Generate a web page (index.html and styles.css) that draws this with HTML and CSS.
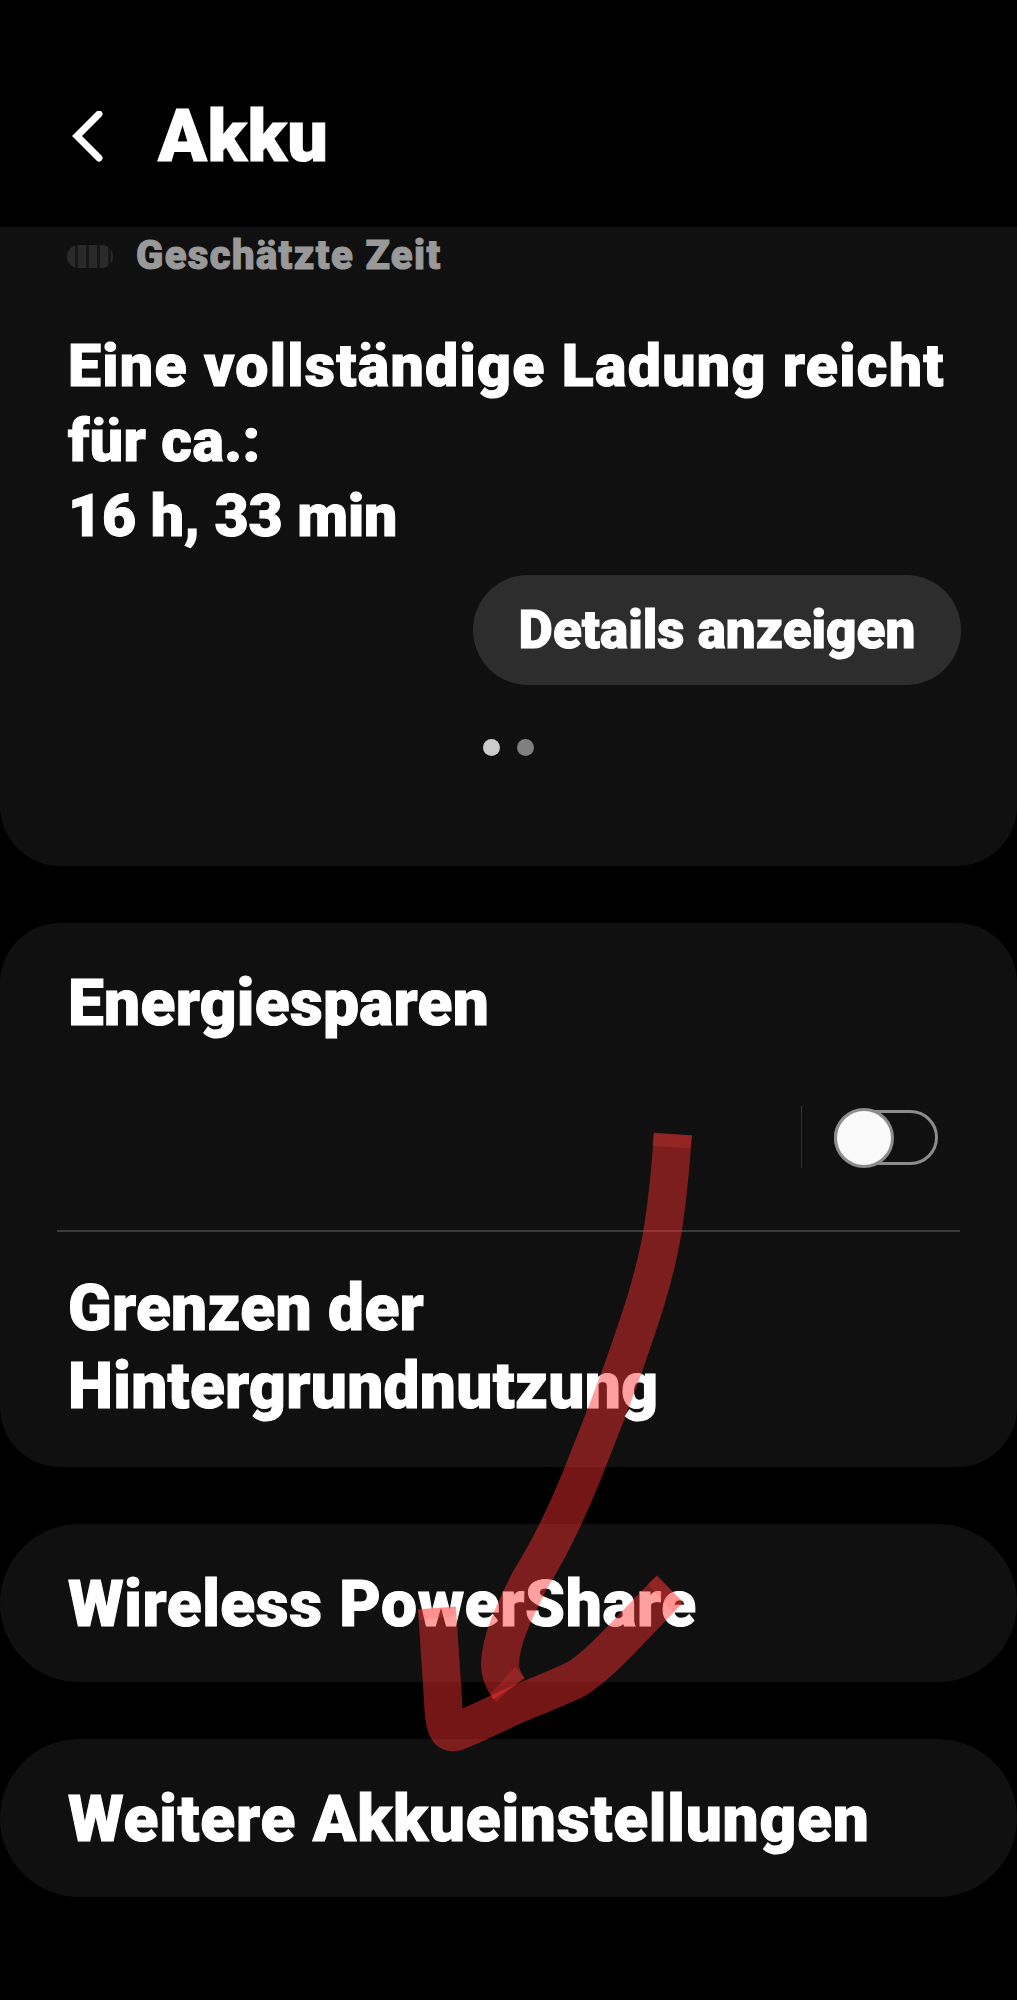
FILE: index.html
```html
<!DOCTYPE html>
<html lang="de">
<head>
<meta charset="utf-8">
<title>Akku</title>
<link rel="stylesheet" href="styles.css">
</head>
<body>
<div class="page">
  <header class="top">
    <svg class="back" width="32" height="52" viewBox="0 0 32 52"><path d="M27 3 L5 25 L27 47" fill="none" stroke="#fff" stroke-width="7" stroke-linecap="round" stroke-linejoin="miter"/></svg>
    <h1 class="title">Akku</h1>
  </header>
  <section class="card card-first">
    <div class="tag">
      <span class="pill"></span>
      <span class="tag-text">Geschätzte Zeit</span>
    </div>
    <p class="estimate"><span class="lead">Eine vollständige Ladung reicht</span><br>für ca.:<br><span class="time">16 h, 33 min</span></p>
    <div class="action"><span class="btn">Details anzeigen</span></div>
    <div class="dots"><span class="dot dot-on"></span><span class="dot"></span></div>
  </section>
  <section class="card card-group">
    <div class="row-save">
      <div class="label">Energiesparen</div>
      <div class="switch-line">
        <span class="vline"></span>
        <span class="switch"><span class="knob"></span></span>
      </div>
    </div>
    <div class="sep"></div>
    <div class="label label-two">Grenzen der<br>Hintergrundnutzung</div>
  </section>
  <section class="card card-pill"><div class="label">Wireless PowerShare</div></section>
  <section class="card card-pill"><div class="label label-wide">Weitere Akkueinstellungen</div></section>
  <svg class="scribble" width="1017" height="2000" viewBox="0 0 1017 2000">
    <path class="ink" d="M673 1134 C670 1170 668 1205 660 1245 C652 1285 640 1320 626 1360 C612 1400 598 1435 582 1475 C570 1505 555 1540 530 1580 C515 1610 500 1640 500 1665 C500 1675 505 1683 509 1689"/>
    <path class="ink" d="M437 1608 C439 1640 441 1670 443 1700 C444 1730 448 1733 456 1732 C480 1722 500 1712 520 1703 C545 1693 565 1685 578 1678 C600 1664 625 1635 670 1589"/>
    <path class="ink-tip" d="M653 1134 L692 1135 L690 1148 L652 1146 Z"/>
    <path class="ink-tip" d="M490 1694 L515 1667 L524 1677 L496 1702 Z"/>
    <path class="ink-tip" d="M418 1610 L455 1606 L456 1616 L419 1620 Z"/>
    <path class="ink-tip" d="M658 1575 L682 1603 L672 1612 L648 1584 Z"/>
  </svg>
</div>
</body>
</html>
```

FILE: styles.css
```css
* { box-sizing: border-box; }
html, body { margin: 0; padding: 0; background: #000; }
body { font-family: Roboto, Inter, sans-serif; font-weight: 900; color: #fff; -webkit-text-stroke: 1px currentColor; }
.page { position: relative; width: 1017px; height: 2000px; overflow: hidden; background: #000; }

.top { height: 227px; display: flex; align-items: center; padding: 46px 0 0 72px; }
.back { margin-right: 54px; }
.title { margin: 0; font-size: 72px; line-height: 1; font-weight: 900; letter-spacing: 0.5px; }

.card { background: #101010; }
.card-first { height: 639px; border-radius: 0 0 60px 60px; padding: 14px 56px 0 69px; }
.tag { display: flex; align-items: center; height: 30px; }
.pill { width: 46px; height: 23px; margin-left: -2px; border-radius: 12px; margin-right: 23px;
  background: repeating-linear-gradient(90deg, #2a2a2a 0 8px, #171717 8px 11px); }
.tag-text { font-size: 40px; color: #999; line-height: 30px; letter-spacing: 1.4px; }
.estimate { margin: 57px 0 0; font-size: 59px; line-height: 75px; letter-spacing: 0.4px; white-space: nowrap; margin-left: -1px; }
.lead { letter-spacing: 1.3px; }
.time { letter-spacing: -0.1px; }
.action { display: flex; justify-content: flex-end; margin-top: 22px; }
.btn { width: 488px; height: 110px; border-radius: 55px; background: #2d2d2d; display: flex; align-items: center; justify-content: center; font-size: 53px; }
.dots { display: flex; justify-content: center; gap: 17px; margin: 54px 0 0 -13px; }
.dot { width: 17px; height: 17px; border-radius: 50%; background: #808080; }
.dot-on { background: #ccc; }

.card-group { margin-top: 57px; height: 544px; border-radius: 60px; padding: 0 57px; }
.label { font-size: 64px; line-height: 78px; letter-spacing: 0.3px; padding-left: 11px; white-space: nowrap; }
.row-save { height: 307px; padding-top: 42px; }
.switch-line { display: flex; align-items: center; justify-content: flex-end; margin-top: 63px; padding-right: 22px; }
.vline { width: 1px; height: 62px; background: #333; margin-right: 32px; }
.switch { position: relative; width: 104px; height: 55px; border: 3px solid #8c8c8c; border-radius: 28px; }
.knob { position: absolute; left: -3px; top: -5px; width: 60px; height: 60px; border-radius: 50%; background: #fafafa; border: 3px solid #8c8c8c; }
.sep { height: 2px; background: #3a3a3a; }
.label-two { margin-top: 38px; }

.card-pill { margin-top: 57px; height: 158px; border-radius: 79px; padding: 3px 57px 0; display: flex; align-items: center; }
.card-pill .label { letter-spacing: 0.6px; }
.card-pill .label-wide { letter-spacing: 0.8px; }

.scribble { position: absolute; left: 0; top: 0; pointer-events: none; }
.ink { fill: none; stroke: rgba(255, 48, 48, 0.46); stroke-width: 38; stroke-linejoin: round; stroke-linecap: butt; }
.ink-tip { fill: rgba(255, 70, 70, 0.18); }
```
